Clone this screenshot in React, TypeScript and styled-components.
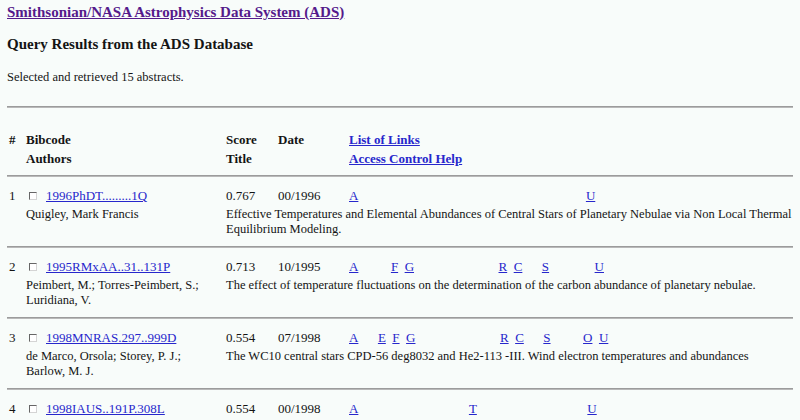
import React from "react";
import styled, { createGlobalStyle } from "styled-components";

const GlobalStyle = createGlobalStyle`
  html, body {
    margin: 0;
    padding: 0;
    background: #f8fcfa;
  }
  body {
    padding: 0 7px;
    font-family: "Liberation Serif", "Times New Roman", serif;
    font-size: 13px;
    line-height: 15px;
    color: #141414;
  }
`;

const Page = styled.div`
  padding-top: 4px;
`;

const SiteTitle = styled.a`
  display: inline-block;
  font-size: 15px;
  line-height: 17px;
  font-weight: bold;
  color: #551a8b;
  text-decoration: underline;
`;

const Heading = styled.h3`
  margin: 15px 0 0;
  font-size: 15px;
  line-height: 17px;
  font-weight: bold;
`;

const Summary = styled.p`
  margin: 17px 0 0;
  font-size: 12.5px;
`;

const Rule = styled.hr<{ $gap?: number }>`
  margin: ${(p) => p.$gap ?? 0}px 0 0;
  border: 0;
  border-top: 1px solid #9c9c9c;
  border-bottom: 1px solid #b9b9b9;
  height: 0;
`;

const Row = styled.div<{ $head?: boolean }>`
  display: grid;
  grid-template-columns: 19px 200px 52px 71px 1fr;
  row-gap: 4px;
  padding: ${(p) => (p.$head ? "24px 0 9px" : "11px 0 9px")};
  font-weight: ${(p) => (p.$head ? "bold" : "normal")};
`;

const Num = styled.div`
  padding-left: 2px;
`;

const BibCell = styled.div`
  display: flex;
  align-items: center;
  height: 15px;
`;

const Check = styled.span`
  display: inline-block;
  box-sizing: border-box;
  width: 8px;
  height: 8px;
  margin: 0 9px 0 3px;
  background: #ffffff;
  border: 1px solid;
  border-color: #666666 #d4d4d4 #d4d4d4 #666666;
`;

const Link = styled.a`
  color: #2727cc;
  text-decoration: underline;
`;

const HeadLink = styled(Link)`
  font-weight: bold;
`;

const Authors = styled.div`
  padding-right: 14px;
  font-size: 12.5px;
`;

const Title = styled.div`
  grid-column: 3 / -1;
  font-size: 12.5px;
`;

const Strip = styled.div`
  white-space: pre;
`;

const SLOTS = ["A", "B", "E", "F", "G", "X", "D", "I", "L", "T", "M", "R", "C", "N", "S", "H", "P", "O", "U"];
const SEP = "\u00a0\u00a0";
const GAP = "\u00a0\u00a0";

type Result = {
  bibcode: string;
  score: string;
  date: string;
  links: string;
  authors?: string;
  title?: string;
};

const RESULTS: Result[] = [
  {
    bibcode: "1996PhDT.........1Q",
    score: "0.767",
    date: "00/1996",
    links: "AU",
    authors: "Quigley, Mark Francis",
    title:
      "Effective Temperatures and Elemental Abundances of Central Stars of Planetary Nebulae via Non Local Thermal Equilibrium Modeling.",
  },
  {
    bibcode: "1995RMxAA..31..131P",
    score: "0.713",
    date: "10/1995",
    links: "AFGRCSU",
    authors: "Peimbert, M.; Torres-Peimbert, S.; Luridiana, V.",
    title: "The effect of temperature fluctuations on the determination of the carbon abundance of planetary nebulae.",
  },
  {
    bibcode: "1998MNRAS.297..999D",
    score: "0.554",
    date: "07/1998",
    links: "AEFGRCSOU",
    authors: "de Marco, Orsola; Storey, P. J.; Barlow, M. J.",
    title: "The WC10 central stars CPD-56 deg8032 and He2-113 -III. Wind electron temperatures and abundances",
  },
  {
    bibcode: "1998IAUS..191P.308L",
    score: "0.554",
    date: "00/1998",
    links: "ATU",
  },
];

function LinkStrip({ have }: { have: string }) {
  return (
    <Strip>
      {SLOTS.map((s, i) => (
        <React.Fragment key={s}>
          {i > 0 && SEP}
          {have.includes(s) ? <Link href="#">{s}</Link> : GAP}
        </React.Fragment>
      ))}
    </Strip>
  );
}

export default function App() {
  return (
    <Page>
      <GlobalStyle />
      <SiteTitle href="#">Smithsonian/NASA Astrophysics Data System (ADS)</SiteTitle>
      <Heading>Query Results from the ADS Database</Heading>
      <Summary>Selected and retrieved 15 abstracts.</Summary>
      <Rule $gap={21} />
      <Row $head>
        <Num>#</Num>
        <div>Bibcode</div>
        <div>Score</div>
        <div>Date</div>
        <div>
          <HeadLink href="#">List of Links</HeadLink>
        </div>
        <div />
        <div>Authors</div>
        <div>Title</div>
        <div />
        <div>
          <HeadLink href="#">Access Control Help</HeadLink>
        </div>
      </Row>
      {RESULTS.map((r, i) => (
        <React.Fragment key={r.bibcode}>
          <Rule />
          <Row>
            <Num>{i + 1}</Num>
            <BibCell>
              <Check />
              <Link href="#">{r.bibcode}</Link>
            </BibCell>
            <div>{r.score}</div>
            <div>{r.date}</div>
            <LinkStrip have={r.links} />
            {r.authors && (
              <>
                <div />
                <Authors>{r.authors}</Authors>
                <Title>{r.title}</Title>
              </>
            )}
          </Row>
        </React.Fragment>
      ))}
    </Page>
  );
}
